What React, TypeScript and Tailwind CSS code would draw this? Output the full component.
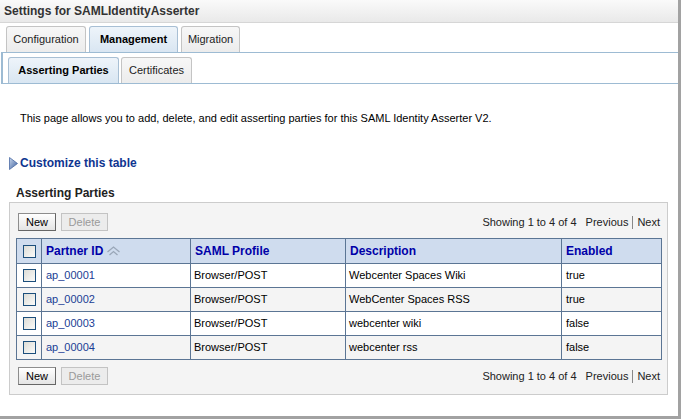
import React from 'react';

const rows = [
    { id: 'ap_00001', profile: 'Browser/POST', description: 'Webcenter Spaces Wiki', enabled: 'true' },
    { id: 'ap_00002', profile: 'Browser/POST', description: 'WebCenter Spaces RSS', enabled: 'true' },
    { id: 'ap_00003', profile: 'Browser/POST', description: 'webcenter wiki', enabled: 'false' },
    { id: 'ap_00004', profile: 'Browser/POST', description: 'webcenter rss', enabled: 'false' },
];

function Tab({ label, active, width }: { label: string; active?: boolean; width: string }) {
    return (
        <div
            className={`${width} h-[26px] flex items-center justify-center rounded-t-[3px] border border-b-0 ${
                active
                    ? 'bg-gradient-to-b from-[#eef4fa] to-[#d9e6f2] border-[#a8bfd4] font-bold text-black'
                    : 'bg-gradient-to-b from-[#f7f7f7] to-[#ececec] border-[#c4c4c4] text-[#222]'
            }`}
        >
            {label}
        </div>
    );
}

function Checkbox() {
    return (
        <div className="w-[13px] h-[13px] border border-[#1c4f7c] bg-gradient-to-br from-[#dcdcd6] to-[#fbfbf9]" />
    );
}

function Toolbar() {
    return (
        <div className="flex items-center justify-between">
            <div className="flex items-center gap-[5px] pl-[2px]">
                <button className="h-[18px] w-[38px] border border-[#8d8d8d] border-b-[#666] border-r-[#666] bg-gradient-to-b from-[#ffffff] to-[#e4e4e4] text-[11px] text-black leading-none">
                    New
                </button>
                <button className="h-[18px] w-[47px] border border-[#c3c3c3] bg-[#ececec] text-[11px] text-[#9a9a9a] leading-none">
                    Delete
                </button>
            </div>
            <div className="flex items-center text-[11px] text-[#222] pr-[1px]">
                <span>Showing 1 to 4 of 4</span>
                <span className="ml-[9px]">Previous</span>
                <span className="mx-[4px] w-px h-[13px] bg-[#888]" />
                <span>Next</span>
            </div>
        </div>
    );
}

function SortIcon() {
    return (
        <svg width="15" height="10" viewBox="0 0 15 10" className="ml-[3px]">
            <path d="M1.5 6 L7.5 1 L13.5 6" fill="none" stroke="#9aa7b8" strokeWidth="1.3" />
            <path d="M3.5 9 L7.5 5.5 L11.5 9" fill="none" stroke="#9aa7b8" strokeWidth="1.3" />
        </svg>
    );
}

export default function App() {
    return (
        <div
            className="w-[681px] h-[419px] bg-white border-r-[3px] border-b-[3px] border-[#a2a2a2] text-[11px] overflow-hidden"
            style={{ fontFamily: '"Liberation Sans", Arial, sans-serif' }}
        >
            <div className="h-[23px] flex items-center px-[4px] bg-gradient-to-b from-[#fafafa] to-[#e9e9e9] border-b border-[#d6d6d6] text-[12px] font-bold text-[#333]">
                Settings for SAMLIdentityAsserter
            </div>

            <div className="flex gap-[3px] pl-[6px] mt-[3px]">
                <Tab label="Configuration" width="w-[80px]" />
                <Tab label="Management" width="w-[89px]" active />
                <Tab label="Migration" width="w-[59px]" />
            </div>

            <div className="ml-[1px] border-t border-l-[2px] border-b border-[#9dbbd3]">
                <div className="flex gap-[2px] pl-[5px] pt-[4px]">
                    <Tab label="Asserting Parties" width="w-[111px]" active />
                    <Tab label="Certificates" width="w-[71px]" />
                </div>
            </div>

            <p className="mt-[26px] pl-[20px] text-[11px] leading-[16px] text-black">
                This page allows you to add, delete, and edit asserting parties for this SAML Identity Asserter V2.
            </p>

            <div className="mt-[29px] h-[16px] pl-[9px] flex items-center gap-[2px]">
                <svg width="9" height="13" viewBox="0 0 9 13">
                    <defs>
                        <linearGradient id="tri" x1="0" y1="0" x2="1" y2="1">
                            <stop offset="0" stopColor="#c9d8ee" />
                            <stop offset="1" stopColor="#3b5e9c" />
                        </linearGradient>
                    </defs>
                    <path d="M0.5 0.5 L8.5 6.5 L0.5 12.5 Z" fill="url(#tri)" stroke="#4a6aa5" strokeWidth="0.8" />
                </svg>
                <span className="text-[12px] font-bold text-[#0f3590]">Customize this table</span>
            </div>

            <div className="mt-[15px] pl-[16px] text-[12px] leading-[14px] font-bold text-[#222]">Asserting Parties</div>

            <div className="mt-[2px] ml-[9px] w-[659px] border border-[#cccccc] bg-[#f4f4f4] px-[6px] pt-[10px] pb-[9px]">
                <Toolbar />

                <table className="mt-[7px] w-[646px] border-collapse border border-[#5b7594] table-fixed">
                    <colgroup>
                        <col className="w-[25px]" />
                        <col className="w-[149px]" />
                        <col className="w-[155px]" />
                        <col className="w-[216px]" />
                        <col className="w-[100px]" />
                    </colgroup>
                    <thead>
                        <tr className="h-[25px] bg-[#cfdcee] text-[12px]">
                            <th className="border border-[#5b7594] p-0">
                                <div className="flex justify-center">
                                    <Checkbox />
                                </div>
                            </th>
                            <th className="border border-[#5b7594] px-[4px] text-left font-bold text-[#0000a8]">
                                <div className="flex items-center">
                                    Partner ID
                                    <SortIcon />
                                </div>
                            </th>
                            <th className="border border-[#5b7594] px-[4px] text-left font-bold text-[#0000a8]">SAML Profile</th>
                            <th className="border border-[#5b7594] px-[4px] text-left font-bold text-[#0000a8]">Description</th>
                            <th className="border border-[#5b7594] px-[4px] text-left font-bold text-[#0000a8]">Enabled</th>
                        </tr>
                    </thead>
                    <tbody>
                        {rows.map((row, i) => (
                            <tr key={row.id} className={`h-[24px] ${i % 2 === 0 ? 'bg-white' : 'bg-[#f4f4f4]'}`}>
                                <td className="border border-[#5b7594] p-0">
                                    <div className="flex justify-center">
                                        <Checkbox />
                                    </div>
                                </td>
                                <td className="border border-[#5b7594] px-[4px] text-[#1a3d94]">{row.id}</td>
                                <td className="border border-[#5b7594] px-[3px] text-black">{row.profile}</td>
                                <td className="border border-[#5b7594] px-[3px] text-black">{row.description}</td>
                                <td className="border border-[#5b7594] px-[4px] text-black">{row.enabled}</td>
                            </tr>
                        ))}
                    </tbody>
                </table>

                <div className="mt-[7px]">
                    <Toolbar />
                </div>
            </div>
        </div>
    );
}
